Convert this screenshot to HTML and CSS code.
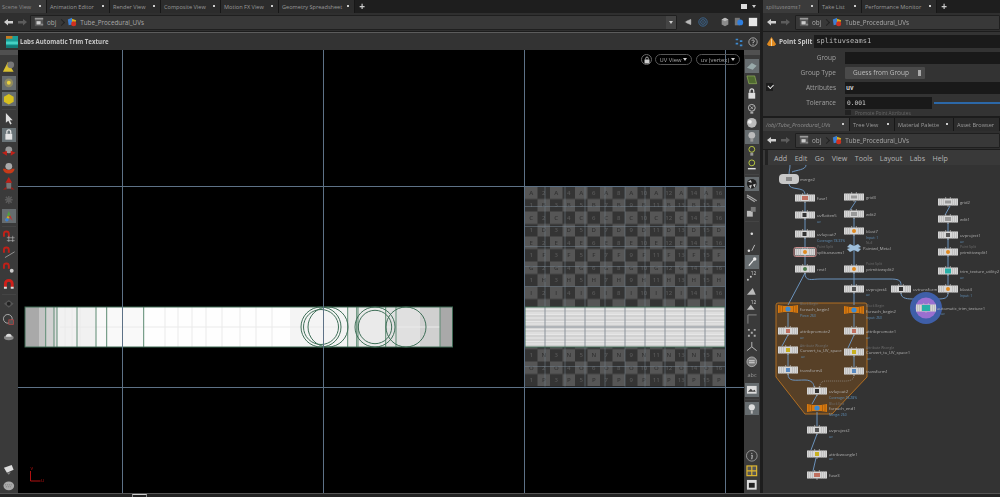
FILE: index.html
```html
<!DOCTYPE html>
<html lang="en">
<head>
<meta charset="utf-8">
<title>Houdini - Tube_Procedural_UVs</title>
<link rel="stylesheet" href="styles.css">
</head>
<body>
<svg class="defs" width="0" height="0" aria-hidden="true">
  <defs>
    <symbol id="i-back" viewBox="0 0 9 9"><path d="M0 4 4 1v2h5v2.5H4V7.5z" fill="#cfcfcf"/></symbol>
    <symbol id="i-fwd" viewBox="0 0 9 9"><path d="M9 4 5 1v2H0v2.5h5v2z" fill="#5c5c5c"/></symbol>
    <symbol id="i-obj" viewBox="0 0 12 12"><rect x="1" y="1" width="10" height="10" fill="#555"/><rect x="1" y="1" width="10" height="2" fill="#999"/><rect x="3" y="5" width="5" height="4" fill="#ccc"/><rect x="8" y="8" width="3" height="2" fill="#888"/></symbol>
    <symbol id="i-geo" viewBox="0 0 12 12"><path d="M1 3 6 1v8L2 10z" fill="#3d7fd0"/><path d="M6 2l5 2-2 5-3-1z" fill="#d8b020"/><circle cx="8" cy="8" r="3" fill="#d03020"/></symbol>
    <g id="node">
      <rect x="-10" y="-3.5" width="20" height="7" fill="#d6d6d6"/>
      <path d="M-8.5-3.5v7M-6.5-3.5v7M-4.5-3.5v7M4.5-3.5v7M6.5-3.5v7M8.5-3.5v7" stroke="#ababab" stroke-width=".5"/>
      <rect x="-3" y="-4.6" width="1.2" height="1.2" fill="#bbb"/><rect x="1.8" y="-4.6" width="1.2" height="1.2" fill="#bbb"/><rect x="-.6" y="3.4" width="1.2" height="1.2" fill="#bbb"/>
    </g>
    <g id="fe">
      <path d="M-10-4 -4-3H4L10-4V4L4 3H-4L-10 4z" fill="#d97a10"/>
      <path d="M-8-3.5v7M-5.5-3v6M5.5-3v6M8-3.5v7" stroke="#8f4f08" stroke-width=".6"/>
      <circle r="2.6" fill="#3d8ad0"/>
    </g>
    <g id="nums-even" class="chk-num">
      <text><tspan x="543.75">2</tspan><tspan x="568.75">4</tspan><tspan x="593.75">6</tspan><tspan x="618.75">8</tspan><tspan x="643.75">10</tspan><tspan x="668.75">12</tspan><tspan x="693.75">14</tspan><tspan x="718.75">16</tspan></text>
    </g>
    <g id="nums-odd" class="chk-num">
      <text><tspan x="531.25">1</tspan><tspan x="556.25">3</tspan><tspan x="581.25">5</tspan><tspan x="606.25">7</tspan><tspan x="631.25">9</tspan><tspan x="656.25">11</tspan><tspan x="681.25">13</tspan><tspan x="706.25">15</tspan></text>
    </g>
    <pattern id="chk" x="525" y="186.5" width="25" height="25" patternUnits="userSpaceOnUse">
      <rect width="25" height="25" fill="#343434"/>
      <rect width="12.5" height="12.5" fill="#565656"/>
      <rect x="12.5" y="12.5" width="12.5" height="12.5" fill="#565656"/>
    </pattern>
    <pattern id="streak" x="525" y="307" width="200" height="20" patternUnits="userSpaceOnUse">
      <rect width="200" height="20" fill="#d6d6d6"/>
      <path d="M0 2.5h200M0 6h200M0 7.5h200M0 11h200M0 14.5h200M0 17h200" stroke="#eee" stroke-width=".7"/>
      <path d="M0 4h200M0 9h200M0 13h200M0 18.5h200" stroke="#c4c4c4" stroke-width=".5"/>
    </pattern>
  </defs>
</svg>

<div class="app">
  <div class="main">
    <section class="left">
      <nav class="tabs">
        <span class="tab active w47">Scene View<i class="x"></i></span>
        <span class="tab w63">Animation Editor<i class="x"></i></span>
        <span class="tab w51">Render View<i class="x"></i></span>
        <span class="tab w60">Composite View<i class="x"></i></span>
        <span class="tab w58">Motion FX View<i class="x"></i></span>
        <span class="tab w76">Geometry Spreadsheet<i class="x"></i></span>
        <span class="plus">+</span>
        <span class="tabs-end"><i class="white-box"></i><i class="tri-down"></i></span>
      </nav>
      <div class="pathbar">
        <svg class="arrow"><use href="#i-back"/></svg>
        <svg class="arrow"><use href="#i-fwd"/></svg>
        <div class="pathbox">
          <svg class="pico"><use href="#i-obj"/></svg><span class="crumb">obj</span><span class="chev"></span>
          <svg class="pico"><use href="#i-geo"/></svg><span class="crumb">Tube_Procedural_UVs</span>
          <span class="drop"><i class="tri-down"></i></span>
        </div>
        <div class="path-tools">
          <svg class="pt" viewBox="0 0 12 12"><path d="M1 6h7M8 3v6M3 5l5-2v6L3 7z" fill="#bbb" stroke="#bbb" stroke-width=".7"/></svg>
          <svg class="pt" viewBox="0 0 12 12"><circle cx="6" cy="6" r="5" fill="none" stroke="#3f6f9f"/><circle cx="6" cy="6" r="2.8" fill="none" stroke="#3f6f9f"/><circle cx="6" cy="6" r=".9" fill="#3f6f9f"/></svg>
          <span class="pt-gap"></span>
          <svg class="pt" viewBox="0 0 12 12"><path d="M2 3 6 1l4 2v6l-4 2-4-2z" fill="#8b8b8b"/><path d="M2 3l4 2 4-2-4-2z" fill="#bdbdbd"/></svg>
          <svg class="pt" viewBox="0 0 12 12"><rect x="1" y="1" width="6" height="9" fill="#777"/><circle cx="7.5" cy="6.5" r="3.5" fill="#2f7fe0"/></svg>
          <svg class="pt" viewBox="0 0 12 12"><rect x="1" y="1" width="10" height="10" fill="#e8e8e8"/></svg>
        </div>
      </div>
      <header class="titlebar">
        <svg class="title-ico" viewBox="0 0 13 13"><rect width="13" height="13" fill="#1a9e98"/><rect y="0" width="7" height="3" fill="#c87a20"/><rect y="6" width="13" height="3" fill="#45d0c4"/><rect y="10" width="13" height="3" fill="#137a76"/></svg>
        <span class="title-text">Labs Automatic Trim Texture</span>
        <span class="title-tools">
          <svg class="pt" viewBox="0 0 12 12"><path d="M2 2h3v2H2zM7 4h3v2H7zM2 7h3v2H2zM7 9h3v2H7z" fill="#3d8ad0"/></svg>
          <svg class="pt" viewBox="0 0 12 12"><circle cx="6" cy="6" r="5" fill="none" stroke="#bbb"/><path d="M4.6 4.5A1.5 1.5 0 1 1 6 6.5V7.5M6 8.6v1" fill="none" stroke="#ccc"/></svg>
        </span>
      </header>
      <div class="view-row">
        <aside class="tools tools-left">
          <div class="scroll-h"></div>
          <div class="tgroup first">
            <svg class="ti" viewBox="0 0 14 14"><path d="M6 2 12 12H1z" fill="#d8c030"/><circle cx="9" cy="5" r="3.500" fill="#777"/></svg>
            <svg class="ti on" viewBox="0 0 14 14"><circle cx="7" cy="7" r="4.500" fill="#8f8a60"/><circle cx="7" cy="7" r="2" fill="#e8d040"/></svg>
            <svg class="ti on" viewBox="0 0 14 14"><path d="M2 5 7 2l5 3v5l-5 3-5-3z" fill="#d8c020"/></svg>
          </div>
          <div class="tgroup">
            <svg class="ti" viewBox="0 0 14 14"><path d="M4 1v10l2.500-2 2 4 1.500-1-2-3.500h3z" fill="#ddd"/></svg>
            <svg class="ti on2" viewBox="0 0 14 14"><rect x="3.500" y="6" width="7" height="6" fill="#e4e4e4"/><path d="M5 6V4a2 2 0 0 1 4 0v2" fill="none" stroke="#e4e4e4" stroke-width="1.300"/></svg>
            <svg class="ti" viewBox="0 0 14 14"><circle cx="7" cy="6" r="3.500" fill="#999"/><path d="M0 9l5-2v5zM14 9 9 7v5z" fill="#c02018"/></svg>
            <svg class="ti" viewBox="0 0 14 14"><circle cx="7" cy="5.500" r="3.500" fill="#aaa"/><path d="M1 8a6 5 0 0 0 12 0l-2.500 0a4 2.500 0 0 1-7 0z" fill="#c83a18"/></svg>
            <svg class="ti" viewBox="0 0 14 14"><rect x="4.500" y="6" width="5" height="6" fill="#777"/><path d="M7 0l3.500 6h-7z" fill="#c02018"/><path d="M1 13l3.500-3v3zM13 13 9.500 10v3z" fill="#a02018"/></svg>
            <svg class="ti" viewBox="0 0 14 14"><path d="M7 3v8M3 7h8M4 4l6 6M10 4l-6 6" stroke="#5a5a5a" stroke-width="1.500"/></svg>
            <svg class="ti on" viewBox="0 0 14 14"><path d="M7 2 9 7H5z" fill="#4fa040"/><path d="M3 12l3-5 2 2z" fill="#d0b020"/><path d="M11 12 7 8l1.500-1.500z" fill="#c03030"/><circle cx="5" cy="11" r="1.800" fill="#3d7fd0"/></svg>
          </div>
          <div class="tgroup">
            <svg class="ti" viewBox="0 0 14 14"><path d="M1 8V5a3.500 3.500 0 0 1 7 0v3H6V5a1.500 1.500 0 0 0-3 0v3z" fill="#c02018"/><path d="M5 9h8M5 12h8M7 7v7M11 7v7" stroke="#bbb" stroke-width=".6"/></svg>
            <svg class="ti" viewBox="0 0 14 14"><path d="M1 8V5a3.500 3.500 0 0 1 7 0v3H6V5a1.500 1.500 0 0 0-3 0v3z" fill="#c02018"/><path d="M3 13 13 7" stroke="#bbb" stroke-width=".7"/></svg>
            <svg class="ti" viewBox="0 0 14 14"><path d="M1 8V5a3.500 3.500 0 0 1 7 0v3H6V5a1.500 1.500 0 0 0-3 0v3z" fill="#c02018"/><circle cx="10" cy="10" r="2" fill="#ccc"/></svg>
            <svg class="ti" viewBox="0 0 14 14"><path d="M2 11V7a5 5 0 0 1 10 0v4H9V7a2 2 0 0 0-4 0v4z" fill="#d0201a"/><path d="M2 10h3v2H2zM9 10h3v2H9z" fill="#ddd"/></svg>
          </div>
          <div class="tgroup">
            <svg class="ti" viewBox="0 0 14 14"><path d="M2 7 7 3l5 4-5 4z" fill="#555"/><circle cx="7" cy="7" r="2" fill="#222"/></svg>
            <svg class="ti" viewBox="0 0 14 14"><circle cx="6" cy="6" r="4.500" fill="none" stroke="#aaa"/><rect x="7" y="7" width="5" height="5" fill="#555" stroke="#c04040" stroke-width=".7"/></svg>
            <svg class="ti" viewBox="0 0 14 14"><ellipse cx="7" cy="9" rx="5" ry="2.500" fill="#888"/><path d="M4 8a3 3 0 0 1 6 0z" fill="#ddd"/></svg>
          </div>
          <div class="tgroup bottom">
            <svg class="ti" viewBox="0 0 14 14"><path d="M2 5 10 2l2 5-7 3z" fill="#ddd"/><path d="M5 10l2 2 2-2.500z" fill="#888"/></svg>
            <svg class="ti" viewBox="0 0 14 14"><ellipse cx="7" cy="7" rx="5.500" ry="4.500" fill="#aaa"/><path d="M3 6h8M4 8h6" stroke="#666" stroke-width=".7" stroke-dasharray="1 1"/></svg>
          </div>
        </aside>

        <div class="viewport">
          <svg class="uv" viewBox="18 50 726 443" preserveAspectRatio="none">
            <rect x="525" y="186.500" width="200" height="200" fill="url(#chk)"/>
            <g class="chk-let">
              <text y="194.500" x="531.25 556.25 581.25 606.25 631.25 656.25 681.25 706.25">AAAAAAAA</text>
              <text y="207" x="543.75 568.75 593.75 618.75 643.75 668.75 693.75 718.75">BBBBBBBB</text>
              <text y="219.500" x="531.25 556.25 581.25 606.25 631.25 656.25 681.25 706.25">CCCCCCCC</text>
              <text y="232" x="543.75 568.75 593.75 618.75 643.75 668.75 693.75 718.75">DDDDDDDD</text>
              <text y="244.500" x="531.25 556.25 581.25 606.25 631.25 656.25 681.25 706.25">EEEEEEEE</text>
              <text y="257" x="543.75 568.75 593.75 618.75 643.75 668.75 693.75 718.75">FFFFFFFF</text>
              <text y="269.500" x="531.25 556.25 581.25 606.25 631.25 656.25 681.25 706.25">GGGGGGGG</text>
              <text y="282" x="543.75 568.75 593.75 618.75 643.75 668.75 693.75 718.75">HHHHHHHH</text>
              <text y="294.500" x="531.25 556.25 581.25 606.25 631.25 656.25 681.25 706.25">IIIIIIII</text>
              <text y="357" x="543.75 568.75 593.75 618.75 643.75 668.75 693.75 718.75">NNNNNNNN</text>
              <text y="369.500" x="531.25 556.25 581.25 606.25 631.25 656.25 681.25 706.25">OOOOOOOO</text>
              <text y="382" x="543.75 568.75 593.75 618.75 643.75 668.75 693.75 718.75">PPPPPPPP</text>
            </g>
            <use href="#nums-even" y="194.500"/><use href="#nums-even" y="219.500"/><use href="#nums-even" y="244.500"/><use href="#nums-even" y="269.500"/><use href="#nums-even" y="294.500"/><use href="#nums-even" y="369.500"/>
            <use href="#nums-odd" y="207"/><use href="#nums-odd" y="232"/><use href="#nums-odd" y="257"/><use href="#nums-odd" y="282"/><use href="#nums-odd" y="357"/><use href="#nums-odd" y="382"/>
            <path class="chk-grid" d="M545 186.500v200M565 186.500v200M585 186.500v200M605 186.500v200M625 186.500v200M645 186.500v200M665 186.500v200M685 186.500v200M705 186.500v200M525 206.500h200M525 226.500h200M525 246.500h200M525 266.500h200M525 286.500h200M525 366.500h200"/>

            <rect x="525" y="307" width="200" height="40" fill="url(#streak)"/>
            <path class="strip-grid" d="M545 307v40M565 307v40M585 307v40M605 307v40M625 307v40M645 307v40M665 307v40M685 307v40M705 307v40M525 327h200"/>
            <rect class="strip-out" x="525" y="307" width="200" height="40"/>

            <rect x="25" y="307" width="14" height="40" fill="#a9a9a9"/>
            <rect x="39" y="307" width="6" height="40" fill="#c4c4c4"/>
            <rect x="45" y="307" width="9" height="40" fill="#d2d2d2"/>
            <rect x="54" y="307" width="3" height="40" fill="#dedede"/>
            <rect x="57" y="307" width="39" height="40" fill="#f1f1f1"/>
            <rect x="96" y="307" width="48" height="40" fill="#f9f9f9"/>
            <rect x="144" y="307" width="146" height="40" fill="#fefefe"/>
            <rect x="290" y="307" width="58" height="40" fill="#f4f4f4"/>
            <rect x="348" y="307" width="37" height="40" fill="#eaeaea"/>
            <rect x="385" y="307" width="35" height="40" fill="#e0e0e0"/>
            <rect x="420" y="307" width="20" height="40" fill="#d0d0d0"/>
            <rect x="440" y="307" width="12.500" height="40" fill="#a9a9a9"/>
            <path class="streaks" d="M65 307v40M72 307v40M80 307v40M165 307v40M178 307v40M192 307v40M206 307v40M222 307v40M240 307v40M256 307v40M272 307v40M60 327h380"/>
            <path class="seams" d="M45.700 307v40M54 307v40M57 307v40M77 307v40M96 307v40M106.700 307v40M143.700 307v40M347.700 307v40M356.700 307v40M358 307v40M385.700 307v40M396 307v40M440 307v40"/>
            <g class="seams-c">
              <circle cx="321" cy="327" r="20"/><circle cx="321" cy="327" r="17.500"/><circle cx="328" cy="327" r="20"/>
              <circle cx="375" cy="327" r="20"/><circle cx="375" cy="327" r="16.700"/><circle cx="406" cy="327" r="20"/>
            </g>
            <rect class="strip-out" x="25" y="307" width="427.500" height="40"/>

            <path class="grid-line" d="M122.500 50v443M323.500 50v443M524.500 50v443M725.500 50v443M18 186.500h726M18 387.500h726"/>
            <path class="axis" d="M30.500 471v10h10"/>
            <text class="axis-t" x="30.500" y="470">v</text><text class="axis-t" x="41" y="482">u</text>
          </svg>
          <div class="view-ctl">
            <span class="lock"><svg viewBox="0 0 8 8" width="8" height="8"><rect x="1.500" y="3.500" width="5" height="4" fill="#ccc"/><path d="M2.700 3.500V2.300a1.300 1.300 0 0 1 2.600 0v1.200" fill="none" stroke="#ccc" stroke-width=".8"/></svg></span>
            <span class="pill p1">UV View<i class="tri-down w"></i></span>
            <span class="pill p2">uv (vertex)<i class="tri-down w"></i></span>
          </div>
        </div>

        <aside class="tools tools-right">
          <div class="scroll-h rt"></div>
          <div class="tgroup first">
            <svg class="ti on" viewBox="0 0 14 14"><path d="M2 9 7 4l5 3-4 4z" fill="#9aa"/></svg>
            <svg class="ti" viewBox="0 0 14 14"><path d="M2 3h8l2 8H4z" fill="#4f6a30" stroke="#9fc060" stroke-width=".6"/></svg>
            <svg class="ti" viewBox="0 0 14 14"><rect x="3.500" y="6" width="7" height="6" fill="#ddd"/><path d="M5 6V4a2 2 0 0 1 4 0v2" fill="none" stroke="#ddd" stroke-width="1.300"/></svg>
            <svg class="ti" viewBox="0 0 14 14"><circle cx="7" cy="6" r="3.500" fill="none" stroke="#bbb"/><path d="M5.500 4.500l3 3M8.500 4.500l-3 3" stroke="#ccc" stroke-width=".7"/><rect x="5.500" y="10" width="3" height="2" fill="#aaa"/></svg>
            <svg class="ti" viewBox="0 0 14 14"><circle cx="7" cy="7" r="5" fill="#bbb"/><circle cx="5" cy="6" r="2" fill="#eee"/></svg>
            <svg class="ti on" viewBox="0 0 14 14"><circle cx="7" cy="5.500" r="3.500" fill="#bbb"/><rect x="5.500" y="9" width="3" height="3" fill="#999"/></svg>
            <svg class="ti" viewBox="0 0 14 14"><circle cx="7" cy="5.500" r="3" fill="none" stroke="#b8c840"/><rect x="5.500" y="9" width="3" height="3" fill="#999"/></svg>
            <svg class="ti" viewBox="0 0 14 14"><circle cx="7" cy="5" r="3" fill="none" stroke="#b8c840"/><path d="M3 11h8" stroke="#ddd" stroke-width="1.500"/></svg>
          </div>
          <div class="tgroup mid">
            <svg class="ti on" viewBox="0 0 14 14"><circle cx="7" cy="7" r="5" fill="#222"/><path d="M3 5l3-2 1 3zM8 8l3-1-1 4zM4 9l3-1-1 4z" fill="#ccc"/></svg>
            <svg class="ti" viewBox="0 0 14 14"><path d="M2 4l5 3 5 3M2 6l8 5" stroke="#aaa" stroke-width="1.200"/></svg>
            <svg class="ti" viewBox="0 0 14 14"><rect x="2" y="6" width="6" height="6" fill="#bbb"/><rect x="6" y="2" width="5" height="5" fill="#777"/></svg>
          </div>
          <div class="tgroup mid">
            <svg class="ti" viewBox="0 0 14 14"><circle cx="7" cy="7" r="1.300" fill="#ddd"/></svg>
            <svg class="ti" viewBox="0 0 14 14"><circle cx="4" cy="10" r="1.300" fill="#ddd"/><path d="M7 10l3-6" stroke="#bbb"/></svg>
            <svg class="ti on" viewBox="0 0 14 14"><path d="M4 11 9 5" stroke="#eee" stroke-width="1.300"/><circle cx="10" cy="4" r="1.800" fill="#eee"/></svg>
            <svg class="ti" viewBox="0 0 14 14"><circle cx="3" cy="11" r="1" fill="#ccc"/><circle cx="6" cy="8" r="1" fill="#ccc"/><text class="tt" x="6" y="6">12</text></svg>
            <svg class="ti" viewBox="0 0 14 14"><path d="M2 11 8 4l3 7z" fill="#bbb"/></svg>
            <svg class="ti" viewBox="0 0 14 14"><path d="M2 12 6 7l4 5z" fill="#bbb"/><text class="tt" x="6" y="6">12</text></svg>
            <svg class="ti" viewBox="0 0 14 14"><path d="M3 12V3h9" fill="none" stroke="#888"/></svg>
            <svg class="ti" viewBox="0 0 14 14"><path d="M3 3h2v2H3zM9 3h2v2H9zM3 9h2v2H3zM9 9h2v2H9zM6 6h2v2H6z" fill="#aaa"/></svg>
            <svg class="ti" viewBox="0 0 14 14"><path d="M7 7V2M7 7l-5 4M7 7l5 4" stroke="#bbb"/></svg>
            <svg class="ti" viewBox="0 0 14 14"><circle cx="7" cy="7" r="5" fill="#777" stroke="#bbb" stroke-width=".8"/><path d="M4 6h6M4 8h6" stroke="#ddd"/></svg>
            <span class="ti abc">abc</span>
            <svg class="ti on" viewBox="0 0 14 14"><rect x="2" y="3" width="10" height="8" fill="#ddd"/><path d="M3 9l3-3 2 2 2-1 1 2z" fill="#444"/></svg>
          </div>
          <div class="tgroup mid">
            <svg class="ti on" viewBox="0 0 14 14"><circle cx="7" cy="5.500" r="3.200" fill="#ddd"/><path d="M6 9h2v3H6z" fill="#bbb"/></svg>
          </div>
          <div class="tgroup bottom">
            <svg class="ti" viewBox="0 0 14 14"><circle cx="7" cy="7" r="5.500" fill="none" stroke="#aaa" stroke-width=".8"/><path d="M7 4v1M6.500 6.500h1l-.5 4" fill="none" stroke="#ccc"/></svg>
            <svg class="ti yel" viewBox="0 0 14 14"><rect x="2" y="2" width="10" height="10" fill="#565656" stroke="#e0b830" stroke-width="1.200"/><path d="M7 2v10M2 7h10" stroke="#e0b830" stroke-width="1.200"/></svg>
            <svg class="ti" viewBox="0 0 14 14"><rect x="2" y="2" width="10" height="10" fill="#ddd"/><path d="M4 5h6v5H4z" fill="#222"/></svg>
          </div>
        </aside>
      </div>
    </section>

    <section class="right">
      <nav class="tabs">
        <span class="tab active it w56">splituvseams1<i class="x"></i></span>
        <span class="tab w43">Take List<i class="x"></i></span>
        <span class="tab w75">Performance Monitor<i class="x"></i></span>
        <span class="plus">+</span>
      </nav>
      <div class="pathbar">
        <svg class="arrow"><use href="#i-back"/></svg>
        <svg class="arrow"><use href="#i-fwd"/></svg>
        <div class="pathbox">
          <svg class="pico"><use href="#i-obj"/></svg><span class="crumb">obj</span><span class="chev"></span>
          <svg class="pico"><use href="#i-geo"/></svg><span class="crumb">Tube_Procedural_UVs</span>
        </div>
      </div>
      <div class="parm-head">
        <svg class="ps-ico" viewBox="0 0 12 12"><path d="M6 1 11 9 9 11H3L1 9z" fill="#e08a20"/><path d="M6 3v8" stroke="#f4d8a8"/></svg>
        <span class="ps-type">Point Split</span>
        <span class="ps-name">splituvseams1</span>
      </div>
      <div class="parms">
        <div class="prow"><label>Group</label><span class="field"></span></div>
        <div class="prow"><label>Group Type</label><span class="dropdown">Guess from Group<i class="updown"></i></span></div>
        <div class="prow"><i class="check"></i><label>Attributes</label><span class="field bold">uv</span></div>
        <div class="prow"><label>Tolerance</label><span class="field num">0.001</span><span class="slider"></span></div>
        <div class="prow cut"><i class="cb"></i><span class="cut-t">Promote Point Attributes</span></div>
      </div>
      <nav class="tabs second">
        <span class="tab active it w87">/obj/Tube_Procedural_UVs<i class="x"></i></span>
        <span class="tab w45">Tree View<i class="x"></i></span>
        <span class="tab w59">Material Palette<i class="x"></i></span>
        <span class="tab w52">Asset Browser</span>
      </nav>
      <div class="pathbar">
        <svg class="arrow"><use href="#i-back"/></svg>
        <svg class="arrow"><use href="#i-fwd"/></svg>
        <div class="pathbox">
          <svg class="pico"><use href="#i-obj"/></svg><span class="crumb">obj</span><span class="chev"></span>
          <svg class="pico"><use href="#i-geo"/></svg><span class="crumb">Tube_Procedural_UVs</span>
        </div>
      </div>
      <div class="menubar"><i class="menu-h"></i><span>Add</span><span>Edit</span><span>Go</span><span>View</span><span>Tools</span><span>Layout</span><span>Labs</span><span>Help</span></div>
      <div class="graph">
        <svg class="net" viewBox="763 165 237 328" preserveAspectRatio="none">
          <path class="netbox" d="M778 303H865Q867 303 867 305V377L832 414H805L776 377V305Q776 303 778 303z"/>
          <g class="wire">
            <path d="M790 165C790 170 789 170 789 175M806 165C806 170 796 170 792 172"/>
            <path d="M789 184C789 191 805 186 805 194M805 202V265M805 273 788 305"/>
            <path d="M805 273C805 282 812 279 820 279H890C898 279 901 280 901 285"/>
            <path d="M856 201 850 210M854 218V305"/>
            <path d="M950 206 945 215M948 223V285"/>
            <path d="M901 293C901 299 908 299 915 299H937C945 299 948 298 948 293"/>
            <path d="M788 313V327M788 335 782 346M788 354V366"/>
            <path d="M854 314V327M854 335 848 348M854 356V367"/>
            <path d="M788 374C788 382 795 380 805 380C812 380 814 384 814 387"/>
            <path d="M817 395 812 404M817 412V426M817 434 811 450M816 458 813 471"/>
          </g>
          <path class="wire-dash" d="M854 375C854 382 846 381 840 381H826C820 381 820 385 820 387"/>

          <rect class="merge" x="779" y="174" width="20" height="10" rx="4"/>
          <circle cx="926" cy="308" r="16" fill="#3f5fa8"/><circle cx="926" cy="308" r="10.500" fill="#9a6fd0"/>

          <use href="#node" x="805" y="198"/><use href="#node" x="805" y="215"/><use href="#node" x="805" y="234"/>
          <rect class="sel" x="794" y="247.500" width="22" height="9" rx="1.500"/>
          <use href="#node" x="805" y="252"/><use href="#node" x="805" y="269"/>
          <use href="#node" x="854" y="197"/><use href="#node" x="854" y="214"/><use href="#node" x="854" y="231"/>
          <use href="#node" x="854" y="269"/><use href="#node" x="854" y="289"/><use href="#node" x="901" y="289"/>
          <use href="#node" x="948" y="202"/><use href="#node" x="948" y="219"/><use href="#node" x="948" y="235"/>
          <use href="#node" x="948" y="252"/><use href="#node" x="948" y="271"/><use href="#node" x="948" y="289"/>
          <use href="#node" x="926" y="308"/>
          <use href="#node" x="788" y="331"/><use href="#node" x="854" y="331"/><use href="#node" x="788" y="350"/><use href="#node" x="854" y="352"/>
          <use href="#node" x="788" y="370"/><use href="#node" x="854" y="371"/><use href="#node" x="817" y="391"/>
          <use href="#node" x="817" y="430"/><use href="#node" x="817" y="454"/><use href="#node" x="817" y="475"/>
          <use href="#fe" x="788" y="309"/><use href="#fe" x="854" y="310"/><use href="#fe" x="817" y="408"/>
          <path d="M854 248m-4-4 4 2 4-2 3 3-3 1 3 1-3 3-4-2-4 2-3-3 3-1-3-1z" fill="#9fc0dc"/>

          <g class="ctr">
            <rect x="786" y="177" width="6" height="4" fill="#888"/>
            <rect x="802" y="196" width="6" height="4" fill="#c07060"/>
            <rect x="802.500" y="213" width="4" height="4" fill="#333"/><rect x="802.500" y="232" width="4" height="4" fill="#333"/>
            <circle cx="805" cy="252" r="2" fill="#e08a20"/><circle cx="805" cy="269" r="2" fill="#4a7a4a"/>
            <rect x="851" y="195.500" width="6" height="3" fill="#999"/><rect x="851" y="212" width="6" height="4" fill="#999"/>
            <circle cx="854" cy="231" r="2" fill="#e08a20"/><circle cx="854" cy="269" r="2" fill="#e08a20"/>
            <rect x="852" y="287" width="4" height="4" fill="#555"/><rect x="899" y="287" width="4" height="4" fill="#333"/>
            <rect x="945" y="200.500" width="6" height="3" fill="#999"/><rect x="945" y="217" width="6" height="4" fill="#999"/>
            <rect x="946" y="233" width="4" height="4" fill="#555"/><circle cx="948" cy="252" r="2" fill="#e08a20"/>
            <rect x="945" y="268.500" width="6" height="5" fill="#28b0a8"/><circle cx="948" cy="289" r="2" fill="#e08a20"/>
            <rect x="922" y="305" width="8" height="6" fill="#28b0a8"/>
            <rect x="786" y="329" width="4" height="4" fill="#c07060"/><rect x="852" y="329" width="4" height="4" fill="#c07060"/>
            <rect x="786" y="348" width="4" height="4" fill="#c8b020"/><rect x="852" y="350" width="4" height="4" fill="#c8b020"/>
            <rect x="786" y="368" width="4" height="4" fill="#5a8ac0"/><rect x="852" y="369" width="4" height="4" fill="#5a8ac0"/>
            <rect x="815" y="389" width="4" height="4" fill="#333"/><rect x="815" y="428" width="4" height="4" fill="#555"/>
            <rect x="815" y="452" width="4" height="4" fill="#c8b020"/><rect x="814" y="473" width="6" height="4" fill="#c07060"/>
          </g>

          <g class="lbl">
            <text x="800" y="181">merge2</text><text x="817" y="199.500">fuse1</text><text x="817" y="216.500">uvflatten5</text>
            <text x="817" y="235.500">uvlayout7</text><text x="817" y="253.500">splituvseams1</text><text x="817" y="270.500">rest1</text>
            <text x="866" y="198.500">grid3</text><text x="866" y="215.500">edit2</text><text x="866" y="232.500">blast7</text>
            <text x="863" y="249.500">Painted_Metal</text><text x="866" y="270.500">primitivesplit2</text><text x="866" y="290.500">uvproject4</text>
            <text x="913" y="290.500">uvtransform1</text>
            <text x="960" y="203.500">grid2</text><text x="960" y="220.500">edit1</text><text x="960" y="236.500">uvproject1</text>
            <text x="960" y="253.500">primitivesplit1</text><text x="960" y="272.500">trim_texture_utility2</text><text x="960" y="290.500">blast4</text>
            <text x="937" y="309.500">automatic_trim_texture1</text>
            <text x="800" y="310.500">foreach_begin1</text><text x="866" y="312.500">foreach_begin2</text>
            <text x="800" y="332.500">attribpromote2</text><text x="866" y="332.500">attribpromote1</text>
            <text x="800" y="351.500">Convert_to_UV_space</text><text x="866" y="353.500">Convert_to_UV_space1</text>
            <text x="800" y="371.500">transform4</text><text x="866" y="372.500">transform1</text>
            <text x="829" y="392.500">uvlayout2</text><text x="829" y="409.500">foreach_end1</text>
            <text x="829" y="431.500">uvproject2</text><text x="829" y="455.500">attribwrangle1</text><text x="829" y="476.500">fuse3</text>
          </g>
          <g class="sub">
            <text x="817" y="223">uv</text><text x="817" y="242">Coverage: 78.33%</text><text x="866" y="239">Input: 1</text>
            <text x="866" y="296">uv</text><text x="960" y="243">uv</text><text x="960" y="279">uv</text><text x="960" y="297">Input: 1</text>
            <text x="800" y="317">Piece: 260</text><text x="866" y="319">Input: 260</text><text x="866" y="339">uv</text>
            <text x="800" y="339">uv</text><text x="801" y="358">uv</text><text x="867" y="360">uv</text>
            <text x="829" y="399">Coverage: 28.28%</text><text x="829" y="416">Merge: 260</text><text x="829" y="438">uv</text><text x="829" y="460">uv</text>
            <text x="941" y="315">uv</text>
          </g>
          <g class="cap">
            <text x="817" y="248">Point Split</text><text x="866" y="264.500">Point Split</text><text x="960" y="247.500">Point Split</text>
            <text x="800" y="305">Block Begin</text><text x="866" y="307">Block Begin</text><text x="800" y="347">Attribute Wrangle</text>
            <text x="866" y="349">Attribute Wrangle</text><text x="829" y="404.500">Block End</text><text x="866" y="244">Null</text>
          </g>
        </svg>
      </div>
    </section>
  </div>
  <footer class="status"><i class="status-box"></i></footer>
</div>
</body>
</html>
```

FILE: styles.css
```css
* { box-sizing: border-box; }
html, body { margin: 0; height: 100%; background: #2f2f2f; overflow: hidden; }
.defs { position: absolute; }
i { font-style: normal; }
svg text, .app { font-family: "Open Sans", "Noto Sans", sans-serif; }
.app { width: 1000px; height: 497px; display: flex; flex-direction: column; filter: blur(.35px); color: #aaa; }
.main { flex: 1; display: flex; min-height: 0; }
.left { width: 760px; flex: none; display: flex; flex-direction: column; }
.right { flex: 1; display: flex; flex-direction: column; border-left: 3px solid #1d1d1d; min-width: 0; }
.status { height: 4px; background: #232323; border-top: 1px solid #555; position: relative; }
.status-box { display: block; margin-left: 132px; width: 15px; height: 3px; border-top: 1px solid #ccc; border-left: 1px solid #888; border-right: 1px solid #888; }

.tabs { height: 13px; flex: none; display: flex; align-items: stretch; background: #1e1e1e; font-size: 5.600px; }
.tab { display: flex; align-items: center; padding-left: 3px; background: #2c2c2c; border-right: 1px solid #171717; color: #9a9a9a; position: relative; white-space: nowrap; }
.tab.active { background: #3b3b3b; padding-left: 2px; color: #8c8c8c; }
.tab.it { font-style: italic; padding-left: 3px; }
.tab .x { position: absolute; right: 5px; top: 5px; width: 2px; height: 2px; background: #ccc; }
.w47 { width: 47px; } .w63 { width: 63px; } .w51 { width: 51px; } .w60 { width: 60px; } .w58 { width: 58px; } .w76 { width: 76px; }
.w56 { width: 56px; } .w43 { width: 43px; } .w75 { width: 75px; } .w87 { width: 87px; } .w45 { width: 45px; } .w59 { width: 59px; } .w52 { flex: 1; }
.plus { width: 14px; text-align: center; color: #ccc; font-weight: 700; font-size: 10px; line-height: 12px; }
.tabs-end { margin-left: auto; display: flex; align-items: center; gap: 5px; padding-right: 4px; }
.white-box { width: 6px; height: 5px; background: #ddd; }
.tri-down { display: inline-block; width: 0; height: 0; border-left: 2px solid transparent; border-right: 2px solid transparent; border-top: 3px solid #ccc; }
.tri-down.w { margin-left: 2px; vertical-align: 1px; }

.pathbar { height: 19px; flex: none; display: flex; align-items: center; padding-left: 2px; background: #2f2f2f; border-bottom: 1px solid #1c1c1c; }
.arrow { width: 9px; height: 9px; margin: 0 3px 0 2px; }
.pathbox { flex: 1; height: 15px; display: flex; align-items: center; padding-left: 3px; border: 1px solid #1f1f1f; background: #383838; border-radius: 1px; position: relative; font-size: 6.300px; min-width: 0; }
.right .pathbox { margin-left: 2px; }
.pico { width: 10px; height: 10px; flex: none; }
.crumb { margin-left: 3px; color: #a8a8a8; white-space: nowrap; }
.chev { width: 5px; height: 5px; margin: 0 3px; border-top: 1px solid #222; border-right: 1px solid #222; transform: rotate(45deg); flex: none; }
.drop { position: absolute; right: 0; top: 0; bottom: 0; width: 10px; background: #444; display: flex; align-items: center; justify-content: center; }
.path-tools { display: flex; align-items: center; gap: 4px; padding: 0 2px 0 7px; }
.pt { width: 10px; height: 10px; }
.pt-gap { width: 4px; }

.titlebar { height: 18px; flex: none; display: flex; align-items: center; padding-left: 6px; background: #333; border-top: 1px solid #5c5c5c; font-size: 6.100px; }
.title-ico { width: 12px; height: 12px; }
.title-text { margin-left: 2px; font-weight: 700; color: #c8c8c8; }
.title-tools { margin-left: auto; display: flex; gap: 4px; padding-right: 2px; }

.view-row { flex: 1; display: flex; min-height: 0; }
.tools { flex: none; width: 18px; background: #3a3a3a; display: flex; flex-direction: column; align-items: center; }
.tools-right { width: 16px; }
.scroll-h { align-self: stretch; height: 5px; background: #505050; }
.tgroup { display: flex; flex-direction: column; align-items: center; gap: 2.600px; padding: 2px 0 3px; border-top: 1px solid #444; }
.tgroup.first { border-top: 0; padding-top: 5px; }
.tgroup.bottom { margin-top: auto; border-top: 0; padding-bottom: 0; }
.tools-right .tgroup { gap: .600px; padding: 2px 0; }
.tools-right .tgroup.first { padding-top: 4px; }
.tools-right .tgroup:nth-child(4) { padding-top: 5px; }
.tools-right .tgroup.bottom { gap: 1px; padding-bottom: 1px; }
.ti { width: 13.600px; height: 13.600px; flex: none; display: block; }
.ti.on { background: #666c6f; }
.ti.on2 { background: #6a7478; }
.ti.abc { font-size: 5.500px; line-height: 13.600px; text-align: center; color: #999; }
.tt { font-size: 5px; fill: #ccc; }

.viewport { flex: 1; position: relative; background: #000; min-width: 0; }
.uv { display: block; width: 100%; height: 100%; }
.chk-let text, .chk-num text { font-size: 6px; text-anchor: middle; font-weight: 600; }
.chk-let text { fill: #333; }
.chk-num text { fill: #585858; }
.chk-grid { stroke: #71808c; stroke-width: 1; opacity: .55; fill: none; }
.strip-grid { stroke: #8a929a; stroke-width: 1; fill: none; }
.strip-out { fill: none; stroke: #3f6a55; stroke-width: 1; }
.streaks { stroke: #eaeaea; stroke-width: 1; fill: none; }
.seams { stroke: #5c8a72; stroke-width: 1; fill: none; }
.seams-c circle { fill: none; stroke: #3f6f58; stroke-width: 1; }
.grid-line { stroke: #5d7186; stroke-width: 1; fill: none; }
.axis { stroke: #b01010; fill: none; stroke-width: 1; }
.axis-t { fill: #b01010; font-size: 5px; }
.view-ctl { position: absolute; top: 4px; right: 4px; display: flex; align-items: center; gap: 4px; font-size: 5.800px; color: #aaa; }
.lock { width: 11px; height: 11px; border: 1px solid #666; border-radius: 50%; display: flex; align-items: center; justify-content: center; margin-right: -1px; }
.pill { height: 11px; border: 1px solid #555; border-radius: 6px; display: flex; align-items: center; justify-content: center; }
.p1 { width: 37px; } .p2 { width: 44px; }

.parm-head { height: 18px; flex: none; display: flex; align-items: center; padding-left: 3px; background: #333; font-size: 6.500px; }
.ps-ico { width: 11px; height: 11px; }
.ps-type { margin-left: 2px; font-weight: 700; color: #c8c8c8; white-space: nowrap; }
.ps-name { flex: 1; height: 13px; margin-left: 2px; padding-left: 2px; background: #1a1a1a; color: #bbb; font-family: "DejaVu Sans Mono", monospace; font-size: 7px; line-height: 12px; }
.parms { height: 66px; flex: none; background: #333; font-size: 6.500px; }
.prow { height: 15px; display: flex; align-items: center; position: relative; padding-left: 82px; }
.prow label { position: absolute; right: 164px; color: #a0a0a0; white-space: nowrap; }
.field { flex: 1; height: 12px; background: #191919; color: #ccc; padding-left: 1px; line-height: 12px; font-size: 6.200px; }
.field.bold { font-weight: 700; }
.field.num { flex: none; width: 87px; font-family: "DejaVu Sans Mono", monospace; padding-left: 2px; }
.slider { flex: 1; margin-left: 2px; height: 2px; background: #2c68a8; }
.dropdown { width: 80px; height: 12px; background: #4a4a4a; border-radius: 1px; padding-left: 8px; color: #bbb; line-height: 12px; position: relative; }
.updown { position: absolute; right: 4px; top: 3px; width: 3px; height: 6px; background: #aaa; }
.check { position: absolute; left: 3px; top: 3px; width: 7px; height: 8px; background: #1d1d1d; }
.check::after { content: ""; position: absolute; left: 2px; top: 1px; width: 4px; height: 2.500px; border-left: 1.500px solid #eee; border-bottom: 1.500px solid #eee; transform: rotate(-45deg); }
.prow.cut { height: 6px; margin-top: 0; color: #666; font-size: 4.800px; line-height: 6px; }
.cb { width: 6px; height: 5px; background: #222; position: absolute; left: 0; margin-left: 82px; top: 0; }
.cut-t { margin-left: 10px; white-space: nowrap; }
.tabs.second { border-top: 2px solid #1c1c1c; height: 15px; }
.menubar { height: 15px; flex: none; display: flex; align-items: center; padding-left: 11px; gap: 7.500px; background: #393939; font-size: 7.100px; color: #b4b4b4; position: relative; }
.menu-h { position: absolute; left: 2px; top: 0; width: 3px; bottom: 0; background: #222; }
.graph { flex: 1; min-height: 0; background: #333; }
.net { display: block; width: 100%; height: 100%; }
.netbox { fill: #574027; stroke: #b26f22; stroke-width: 1; }
.wire path { fill: none; stroke: #6b93bd; stroke-width: 1; }
.wire-dash { fill: none; stroke: #a8a8a8; stroke-width: .6; stroke-dasharray: 1 1; }
.merge { fill: #c8c8c8; }
.sel { fill: none; stroke: #c88a8a; stroke-width: 1; }
.lbl text { font-size: 4.200px; fill: #b0b0b0; }
.sub text { font-size: 3.400px; fill: #5f8fb8; }
.cap text { font-size: 3.400px; fill: #6e6e6e; }
```
